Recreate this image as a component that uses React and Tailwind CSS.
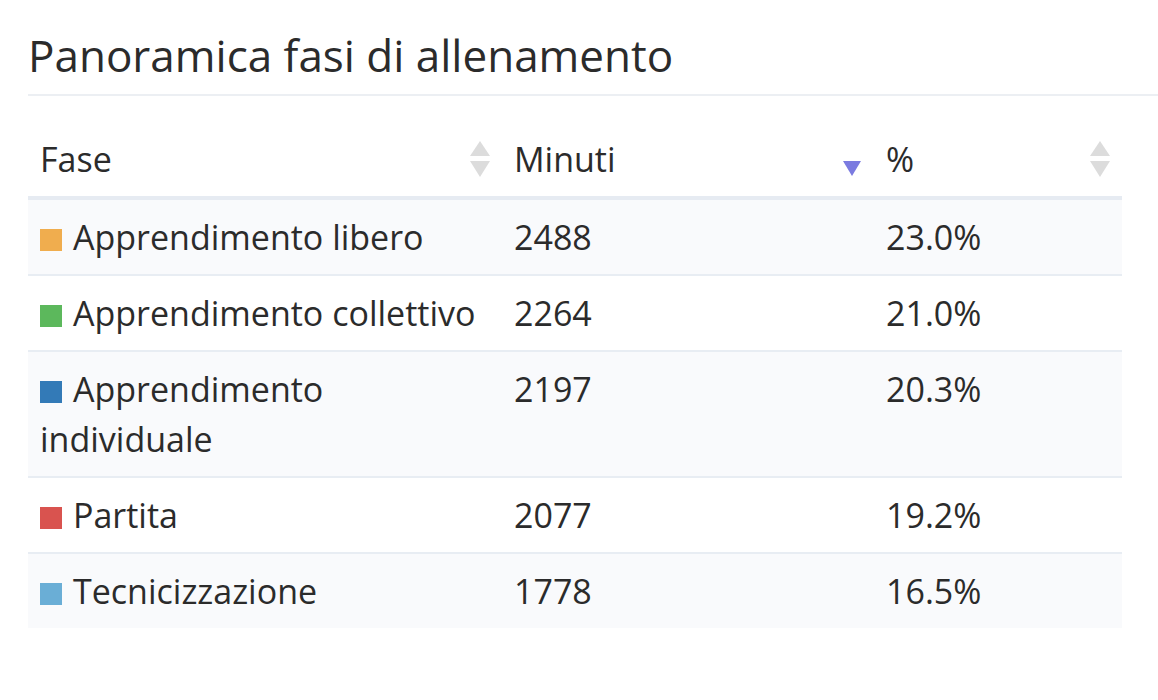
const rows = [
  { color: 'bg-[#f0ad4e]', name: 'Apprendimento libero', min: 2488, pct: '23.0%' },
  { color: 'bg-[#5cb85c]', name: 'Apprendimento collettivo', min: 2264, pct: '21.0%' },
  { color: 'bg-[#337ab7]', name: 'Apprendimento individuale', min: 2197, pct: '20.3%' },
  { color: 'bg-[#d9534f]', name: 'Partita', min: 2077, pct: '19.2%' },
  { color: 'bg-[#6aaed6]', name: 'Tecnicizzazione', min: 1778, pct: '16.5%' },
];

function SortBoth() {
  return (
    <svg width="20" height="36" viewBox="0 0 20 36" className="shrink-0">
      <polygon points="10,0 20,15 0,15" fill="#dcdcdc" />
      <polygon points="0,20 20,20 10,36" fill="#dcdcdc" />
    </svg>
  );
}

function SortDesc() {
  return (
    <svg width="20" height="36" viewBox="0 0 20 36" className="shrink-0">
      <polygon points="1,20 19,20 10,35" fill="#7b7be0" />
    </svg>
  );
}

export default function App() {
  return (
    <div className="w-[1158px] h-[700px] bg-white pl-[28px] font-['Open_Sans',sans-serif] text-[#2b2b2b]">
      <h2 className="pt-[30px] pb-[14px] text-[44px] leading-[50px] border-b-2 border-[#eceff3]">
        Panoramica fasi di allenamento
      </h2>
      <table className="mt-[26px] w-[1094px] table-fixed border-collapse text-[34px] leading-[50px]">
        <colgroup>
          <col className="w-[474px]" />
          <col className="w-[372px]" />
          <col className="w-[248px]" />
        </colgroup>
        <thead>
          <tr className="border-b-4 border-[#e6ebf2]">
            <th className="px-[12px] py-[12px] text-left font-normal">
              <div className="flex items-center justify-between">
                <span>Fase</span>
                <SortBoth />
              </div>
            </th>
            <th className="px-[12px] py-[12px] text-left font-normal">
              <div className="flex items-center justify-between">
                <span>Minuti</span>
                <SortDesc />
              </div>
            </th>
            <th className="px-[12px] py-[12px] text-left font-normal">
              <div className="flex items-center justify-between">
                <span>%</span>
                <SortBoth />
              </div>
            </th>
          </tr>
        </thead>
        <tbody>
          {rows.map((r, i) => (
            <tr
              key={r.name}
              className={`${i % 2 === 0 ? 'bg-[#f9fafc]' : 'bg-white'} ${i < rows.length - 1 ? 'border-b-2 border-[#e8edf3]' : ''}`}
            >
              <td className="px-[12px] py-[12px] align-top">
                <span className={`inline-block w-[22px] h-[22px] mr-[11px] align-[-1px] ${r.color}`} />
                {r.name}
              </td>
              <td className="px-[12px] py-[12px] align-top">{r.min}</td>
              <td className="px-[12px] py-[12px] align-top">{r.pct}</td>
            </tr>
          ))}
        </tbody>
      </table>
    </div>
  );
}
